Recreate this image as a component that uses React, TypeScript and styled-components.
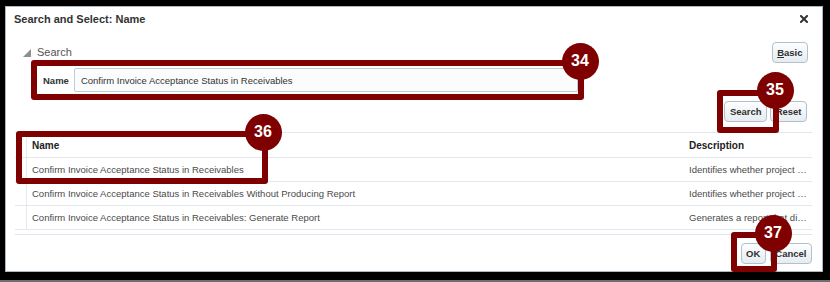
import styled, { createGlobalStyle } from 'styled-components'

const GlobalStyle = createGlobalStyle`
  html, body {
    margin: 0;
    padding: 0;
    background: #000;
  }
  body {
    font-family: 'Liberation Sans', Arial, sans-serif;
  }
`

const rows = [
  {
    name: 'Confirm Invoice Acceptance Status in Receivables',
    description: 'Identifies whether project invoices were accepted in Receivables',
  },
  {
    name: 'Confirm Invoice Acceptance Status in Receivables Without Producing Report',
    description: 'Identifies whether project invoices were accepted without a report',
  },
  {
    name: 'Confirm Invoice Acceptance Status in Receivables: Generate Report',
    description: 'Generates a report that displays invoice acceptance status',
  },
]

const callouts = [
  { n: 34, x: 31, y: 60, w: 553, h: 40, cx: 580, cy: 61 },
  { n: 35, x: 717, y: 90, w: 62, h: 43, cx: 775, cy: 90 },
  { n: 36, x: 16, y: 131, w: 252, h: 53, cx: 263, cy: 132 },
  { n: 37, x: 731, y: 232, w: 46, h: 40, cx: 773, cy: 233 },
]

export default function App() {
  return (
    <>
      <GlobalStyle />
      <Frame>
        <Dialog>
          <TitleBar>
            <Title>Search and Select: Name</Title>
            <CloseButton aria-label="Close">
              <svg width="8" height="8" viewBox="0 0 8 8">
                <path d="M1 1L7 7M7 1L1 7" stroke="#333" strokeWidth="2" strokeLinecap="square" />
              </svg>
            </CloseButton>
          </TitleBar>
          <Body>
            <SearchHeader>
              <Disclosure>
                <svg width="8" height="8" viewBox="0 0 8 8">
                  <polygon points="8,0 8,8 0,8" fill="#8f8f8f" />
                </svg>
                Search
              </Disclosure>
              <Button>
                <u>B</u>asic
              </Button>
            </SearchHeader>
            <FieldRow>
              <FieldLabel>Name</FieldLabel>
              <TextInput readOnly value="Confirm Invoice Acceptance Status in Receivables" />
            </FieldRow>
            <ActionRow>
              <Button>Search</Button>
              <Button>Reset</Button>
            </ActionRow>
            <Results>
              <HeaderRow>
                <Gutter />
                <HeadCell>Name</HeadCell>
                <HeadCell>Description</HeadCell>
              </HeaderRow>
              {rows.map((r) => (
                <Row key={r.name}>
                  <Gutter />
                  <Cell>{r.name}</Cell>
                  <Cell>{r.description}</Cell>
                </Row>
              ))}
            </Results>
            <Footer>
              <Button>OK</Button>
              <Button>Cancel</Button>
            </Footer>
          </Body>
        </Dialog>
        {callouts.map((c) => (
          <Callout key={`box-${c.n}`} $x={c.x} $y={c.y} $w={c.w} $h={c.h} />
        ))}
        {callouts.map((c) => (
          <Marker key={`num-${c.n}`} $cx={c.cx} $cy={c.cy}>
            {c.n}
          </Marker>
        ))}
      </Frame>
    </>
  )
}

const Frame = styled.div`
  position: relative;
  width: 830px;
  height: 282px;
  box-sizing: border-box;
  padding: 6px 7px 8px 5px;
  background: #000;
  border-bottom: 2px solid #6e6e6e;
`

const Dialog = styled.div`
  height: 100%;
  box-sizing: border-box;
  background: #fff;
  border: 1px solid #aeb8c0;
`

const TitleBar = styled.div`
  display: flex;
  align-items: center;
  justify-content: space-between;
  height: 24px;
  padding: 0 14px 0 8px;
`

const Title = styled.div`
  font-size: 11px;
  font-weight: bold;
  line-height: 13px;
  color: #333;
`

const CloseButton = styled.div`
  display: flex;
  align-items: center;
  width: 8px;
  height: 8px;
`

const Body = styled.div`
  padding: 0 10px 0 9px;
`

const SearchHeader = styled.div`
  display: flex;
  align-items: center;
  justify-content: space-between;
  height: 21px;
  margin-top: 11px;
  padding: 0 4px 0 8px;
`

const Disclosure = styled.div`
  display: flex;
  align-items: center;
  gap: 6px;
  font-size: 11px;
  line-height: 13px;
  color: #555;
`

const Button = styled.button`
  height: 21px;
  box-sizing: border-box;
  padding: 0 4.5px;
  border: 1px solid #b3c0cb;
  border-radius: 4px;
  background: linear-gradient(#fdfeff, #e6ecf1);
  font-family: 'Liberation Sans', Arial, sans-serif;
  font-size: 9.5px;
  font-weight: bold;
  color: #2f2f2f;
  u {
    text-decoration: underline;
  }
`

const FieldRow = styled.div`
  display: flex;
  align-items: center;
  gap: 5px;
  height: 24px;
  margin-top: 5px;
  padding-left: 28px;
`

const FieldLabel = styled.label`
  font-size: 9.5px;
  font-weight: bold;
  color: #333;
`

const TextInput = styled.input`
  width: 504px;
  height: 24px;
  box-sizing: border-box;
  padding: 0 6px;
  border: 1px solid #c3ccd4;
  border-radius: 2px;
  background: #fbfcfd;
  font-family: 'Liberation Sans', Arial, sans-serif;
  font-size: 9.5px;
  color: #333;
  outline: none;
`

const ActionRow = styled.div`
  display: flex;
  justify-content: flex-end;
  gap: 3px;
  margin-top: 9px;
  padding-right: 5px;
`

const Results = styled.div`
  margin-top: 10px;
  padding-bottom: 4px;
  border-top: 1px solid #e2e8ed;
  border-bottom: 1px solid #dfe5ea;
`

const HeaderRow = styled.div`
  display: grid;
  grid-template-columns: 12px 1fr 128px;
  height: 25px;
  box-sizing: border-box;
  border-bottom: 1px solid #e2e8ed;
`

const Row = styled(HeaderRow)`
  height: 24px;
`

const Gutter = styled.div`
  border-right: 1px solid #e4e9ee;
`

const HeadCell = styled.div`
  display: flex;
  align-items: center;
  padding: 0 5px;
  font-size: 10px;
  font-weight: bold;
  color: #222;
`

const Cell = styled.div`
  align-self: center;
  padding: 0 5px;
  font-size: 9.5px;
  color: #4a4a4a;
  white-space: nowrap;
  overflow: hidden;
  text-overflow: ellipsis;
`

const Footer = styled.div`
  display: flex;
  justify-content: flex-end;
  gap: 4px;
  margin-top: 8px;
`

const Callout = styled.div<{ $x: number; $y: number; $w: number; $h: number }>`
  position: absolute;
  left: ${({ $x }) => $x}px;
  top: ${({ $y }) => $y}px;
  width: ${({ $w }) => $w}px;
  height: ${({ $h }) => $h}px;
  box-sizing: border-box;
  border: 6px solid #7e0000;
  border-radius: 3px;
`

const Marker = styled.div<{ $cx: number; $cy: number }>`
  position: absolute;
  left: ${({ $cx }) => $cx - 18.5}px;
  top: ${({ $cy }) => $cy - 18.5}px;
  width: 37px;
  height: 37px;
  display: flex;
  align-items: center;
  justify-content: center;
  border-radius: 50%;
  background: #7e0000;
  color: #fff;
  font-size: 16px;
  font-weight: bold;
`
